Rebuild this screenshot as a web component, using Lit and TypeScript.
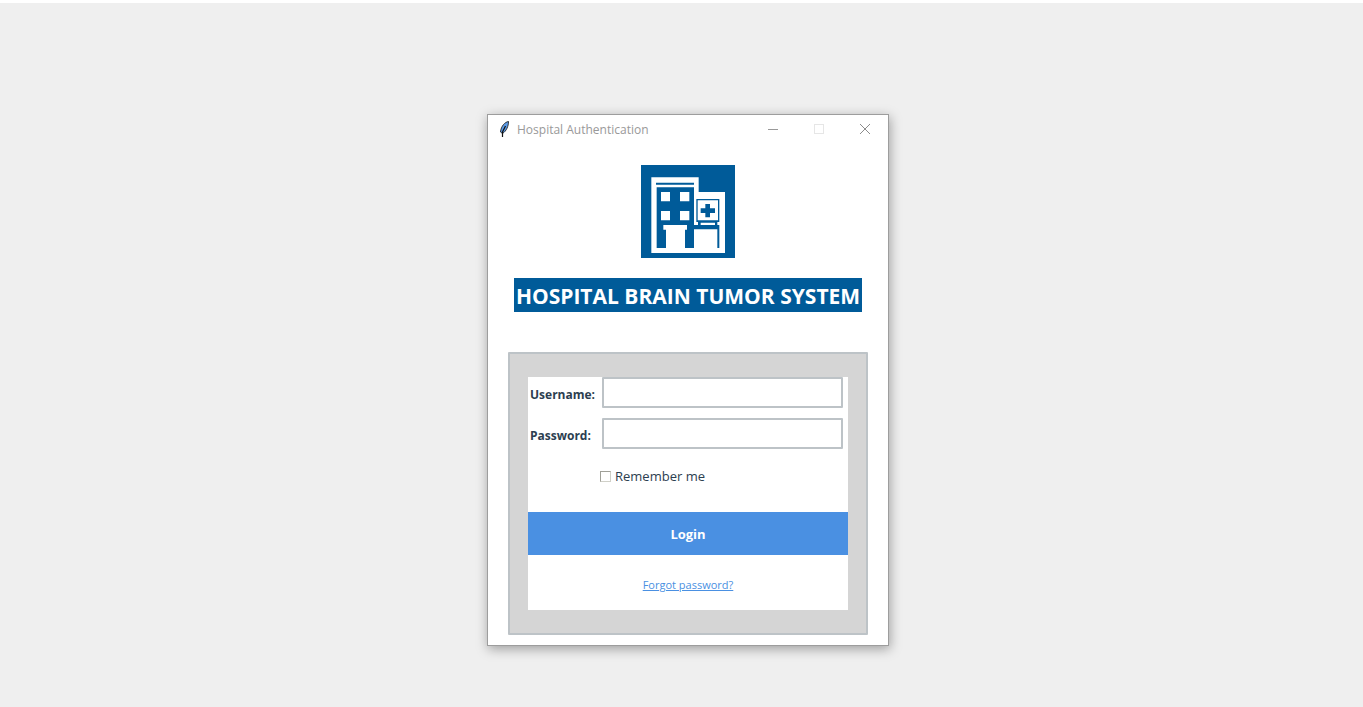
import { LitElement, html, css } from "lit";
import { customElement } from "lit/decorators.js";

@customElement("app-root")
export class AppRoot extends LitElement {
  static styles = css`
    :host {
      display: block;
      font-family: "Open Sans", "Noto Sans", sans-serif;
      color: #2c3e50;
    }
    * {
      box-sizing: border-box;
    }
    .desktop {
      min-height: 100vh;
      display: flex;
      justify-content: center;
      align-items: flex-start;
      padding: 111px 0 24px 13px;
      border-top: 3px solid #fff;
      background: #efefef;
    }
    .window {
      width: 402px;
      max-width: 100%;
      background: #fff;
      border: 1px solid #9d9d9d;
      box-shadow: 1px 3px 11px rgba(0, 0, 0, 0.34);
      display: flex;
      flex-direction: column;
    }
    .titlebar {
      display: flex;
      align-items: center;
      height: 28px;
      padding-left: 9px;
      color: #999;
      font-size: 12px;
    }
    .feather {
      margin-right: 6px;
    }
    .title {
      flex: 1;
    }
    .control {
      width: 46px;
      height: 28px;
      padding: 0;
      border: 0;
      background: none;
      display: grid;
      place-items: center;
    }
    svg {
      display: block;
    }
    .content {
      display: flex;
      flex-direction: column;
      align-items: center;
      padding: 22px 20px 10px;
    }
    h1 {
      margin: 20px 0 40px;
      padding: 2px 2px 0;
      background: #005b99;
      color: #fff;
      font-size: 21px;
      line-height: 32px;
      font-weight: 700;
      white-space: nowrap;
    }
    .frame {
      width: 100%;
      padding: 23px 18px;
      background: #d5d5d5;
      border: 2px solid #bdc3c7;
      border-radius: 1px;
    }
    form {
      background: #fff;
      display: flex;
      flex-direction: column;
    }
    .fields {
      display: grid;
      grid-template-columns: 72px 1fr;
      row-gap: 10px;
      padding: 0 5px 0 2px;
    }
    .fields label {
      font-size: 12px;
      font-weight: 700;
      line-height: 36px;
      height: 31px;
    }
    .fields input {
      width: 100%;
      height: 31px;
      margin: 0;
      border: 2px solid #bdc3c7;
      border-radius: 1px;
      background: #fff;
      font: inherit;
      font-size: 13px;
      outline: none;
    }
    .remember {
      display: flex;
      align-items: center;
      gap: 4px;
      height: 20px;
      margin: 17px 0 26px 72px;
      font-size: 13px;
    }
    .remember input {
      appearance: none;
      width: 11px;
      height: 11px;
      margin: 0;
      border: 1px solid;
      border-color: #a0a098 #d0d0c8 #d0d0c8 #a0a098;
      background: #fff;
    }
    .login {
      height: 43px;
      border: 0;
      padding: 0;
      background: #4a90e2;
      color: #fff;
      font: inherit;
      font-size: 13px;
      font-weight: 700;
    }
    .forgot {
      align-self: center;
      margin: 20px 0 15px;
      color: #4a90e2;
      font-size: 11px;
      line-height: 20px;
    }
  `;

  render() {
    return html`
      <main class="desktop">
        <section class="window" aria-label="Hospital Authentication">
          <header class="titlebar">
            <svg class="feather" width="14" height="18" viewBox="0 0 14 18" aria-hidden="true">
              <path d="M11.500 1.500C8 2 4 6 3.500 12L5.500 13.500C9.500 11 11.500 6 11.500 1.500Z" fill="#5b9be8" stroke="#222" stroke-width=".9" />
              <path d="M8.500 6L5.500 12L5.500 17" fill="none" stroke="#111" stroke-width="1.200" />
            </svg>
            <span class="title">Hospital Authentication</span>
            <button class="control" type="button" aria-label="Minimize">
              <svg width="10" height="10"><path d="M0 5.500H10" stroke="#999" /></svg>
            </button>
            <button class="control" type="button" aria-label="Maximize" disabled>
              <svg width="10" height="10"><rect x=".5" y=".5" width="9" height="9" fill="none" stroke="#e6e6e6" /></svg>
            </button>
            <button class="control" type="button" aria-label="Close">
              <svg width="10" height="10"><path d="M0 0L10 10M10 0L0 10" stroke="#8c8c8c" /></svg>
            </button>
          </header>
          <div class="content">
            <svg width="94" height="93" viewBox="0 0 282 279" role="img" aria-label="Hospital">
              <path fill="#005b99" d="M0 0H282V279H0Z" />
              <path fill="#fff" d="M31 37H173V81H252V264H31Z" />
              <path fill="#005b99" d="M45 53H159V59H45ZM47 67H159V249H47Z" />
              <path fill="#fff" d="M60 81h27v28h-27zM117 81h28v28h-28zM60 138h27v28h-27zM117 138h28v28h-28zM67 180h71v14h-6v56h-57v-56h-8z" />
              <path fill="#005b99" d="M166 102h69v69h-6v9h6v69h-6v-56h-70v-13h12v-9h-5z" />
              <path fill="#fff" d="M170 106h61v60h-61zM179 173h43v7h-43z" />
              <path fill="#005b99" d="M193 117h14v13h15v14h-15v13h-14v-13h-14v-14h14z" />
            </svg>
            <h1>HOSPITAL BRAIN TUMOR SYSTEM</h1>
            <div class="frame">
              <form @submit=${(e: Event) => e.preventDefault()}>
                <div class="fields">
                  <label for="username">Username:</label>
                  <input id="username" type="text" autocomplete="username" />
                  <label for="password">Password:</label>
                  <input id="password" type="password" autocomplete="current-password" />
                </div>
                <label class="remember"><input type="checkbox" />Remember me</label>
                <button class="login" type="submit">Login</button>
                <a class="forgot" href="#forgot">Forgot password?</a>
              </form>
            </div>
          </div>
        </section>
      </main>
    `;
  }
}
